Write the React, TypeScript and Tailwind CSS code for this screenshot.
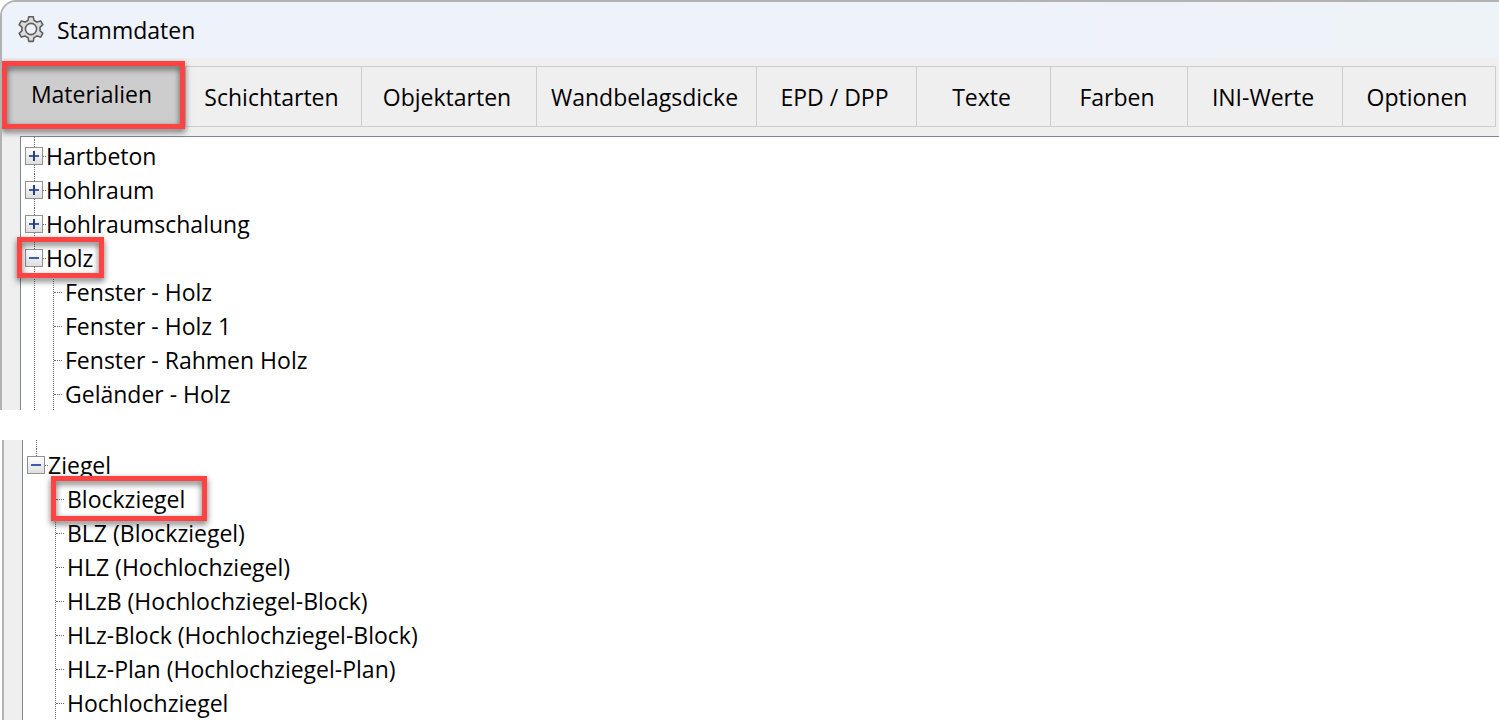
import { useState } from 'react';
import clsx from 'clsx';

type TreeNode = {
  name: string;
  marked?: boolean;
  children?: TreeNode[];
};

const tabs = [
  'Materialien',
  'Schichtarten',
  'Objektarten',
  'Wandbelagsdicke',
  'EPD / DPP',
  'Texte',
  'Farben',
  'INI-Werte',
  'Optionen',
];

const upperNodes: TreeNode[] = [
  { name: 'Hartbeton', children: [] },
  { name: 'Hohlraum', children: [] },
  { name: 'Hohlraumschalung', children: [] },
  {
    name: 'Holz',
    marked: true,
    children: [
      { name: 'Fenster - Holz' },
      { name: 'Fenster - Holz 1' },
      { name: 'Fenster - Rahmen Holz' },
      { name: 'Geländer - Holz' },
    ],
  },
];

const lowerNodes: TreeNode[] = [
  {
    name: 'Ziegel',
    children: [
      { name: 'Blockziegel', marked: true },
      { name: 'BLZ (Blockziegel)' },
      { name: 'HLZ (Hochlochziegel)' },
      { name: 'HLzB (Hochlochziegel-Block)' },
      { name: 'HLz-Block (Hochlochziegel-Block)' },
      { name: 'HLz-Plan (Hochlochziegel-Plan)' },
      { name: 'Hochlochziegel' },
    ],
  },
];

function GearIcon() {
  return (
    <svg viewBox="-14 -13 28 28" className="size-7 shrink-0" aria-hidden="true">
      <path
        d="M-3-8.6-2.2-12.4H2.2L3-8.6Q4.6-8 5.95-6.9L9.64-8.1 11.84-4.3 8.95-1.7Q9.3 0 8.95 1.7L11.84 4.3 9.64 8.1 5.95 6.9Q4.6 8 3 8.6L2.2 12.4H-2.2L-3 8.6Q-4.6 8-5.95 6.9L-9.64 8.1-11.84 4.3-8.95 1.7Q-9.3 0-8.95-1.7L-11.84-4.3-9.64-8.1-5.95-6.9Q-4.6-8-3-8.6Z"
        fill="#dcdcdc"
        stroke="#606060"
        strokeWidth="1.6"
        strokeLinejoin="round"
      />
      <circle r="5.6" fill="#eef3fa" stroke="#606060" strokeWidth="1.6" />
    </svg>
  );
}

// red frame laid over the element it marks
function Marker({ className }: { className: string }) {
  return (
    <span
      aria-hidden="true"
      className={clsx(
        'pointer-events-none absolute z-10 border-5 border-[#ff4343] drop-shadow-[0_3px_3px_rgba(0,0,0,0.6)]',
        className
      )}
    />
  );
}

function Toggle({ open, label, onClick }: { open: boolean; label: string; onClick: () => void }) {
  return (
    <button
      type="button"
      aria-expanded={open}
      aria-label={label}
      onClick={onClick}
      className="flex size-[18px] shrink-0 items-center justify-center border border-[#919191] bg-linear-to-b from-white to-[#dedede]"
    >
      <svg viewBox="0 0 16 16" className="size-4" stroke="#3f5ba9" strokeWidth="2">
        <path d="M3 8H13" />
        {!open && <path d="M8 3V13" stroke="#26407f" />}
      </svg>
    </button>
  );
}

function Tree({ nodes, continues }: { nodes: TreeNode[]; continues: boolean }) {
  const [closed, setClosed] = useState<string[]>([]);

  const toggle = (name: string) => {
    setClosed((prev) => (prev.includes(name) ? prev.filter((n) => n !== name) : [...prev, name]));
  };

  return (
    <ul>
      {nodes.map((node) => {
        const children = node.children ?? [];
        const open = children.length > 0 && !closed.includes(node.name);
        return (
          <li key={node.name}>
            <div className="flex h-[34px]">
              <div className="flex w-[18px] flex-col">
                <span className="ml-[9px] h-[7px] border-l border-dotted border-[#6b6b6b]" />
                <Toggle open={open} label={node.name} onClick={() => toggle(node.name)} />
                {continues && <span className="ml-[9px] flex-1 border-l border-dotted border-[#6b6b6b]" />}
              </div>
              <span className="mt-4 w-[3px] border-t border-dotted border-[#6b6b6b]" />
              <span className="relative leading-8">
                {node.name}
                {node.marked && <Marker className="-top-[5px] -right-[11px] -left-[29px] h-[41px]" />}
              </span>
            </div>
            {open && (
              <div className="flex">
                <div className="w-7 pl-[9px]">
                  {continues && <div className="h-full border-l border-dotted border-[#6b6b6b]" />}
                </div>
                <ul className="border-l border-dotted border-[#6b6b6b]">
                  {children.map((child) => (
                    <li key={child.name} className="flex h-[34px]">
                      <span className="mt-4 mr-[3px] w-2 border-t border-dotted border-[#6b6b6b]" />
                      <span className="relative leading-8">
                        {child.name}
                        {child.marked && <Marker className="-top-[7px] -right-[22px] -left-4 h-[45px]" />}
                      </span>
                    </li>
                  ))}
                </ul>
              </div>
            )}
          </li>
        );
      })}
    </ul>
  );
}

export default function App() {
  const [active, setActive] = useState('Materialien');

  return (
    <div className="flex h-screen flex-col gap-[30px] overflow-hidden bg-white font-['Open_Sans','Noto_Sans',sans-serif] text-[23px] whitespace-nowrap text-black">
      <section className="shrink-0 overflow-hidden rounded-tl-2xl border-t-2 border-l-2 border-[#b2b2b2] bg-[#efefef]">
        <header className="flex h-14 items-center gap-3 bg-linear-to-r from-[#eef2fb] to-[#eef3f8] pl-[15px]">
          <GearIcon />
          <h1>Stammdaten</h1>
        </header>

        <div
          role="tablist"
          className="mt-2 mr-[3px] grid h-[61px] grid-cols-[184fr_176fr_175fr_220fr_160fr_134fr_137fr_155fr_153fr] border-y border-[#cdcdcd]"
        >
          {tabs.map((tab) => (
            <button
              key={tab}
              type="button"
              role="tab"
              aria-selected={active === tab}
              onClick={() => setActive(tab)}
              className={clsx(
                'relative border-r border-[#cdcdcd] pr-1',
                active === tab ? 'bg-[#cdcdcd] pb-1' : 'pt-0.5'
              )}
            >
              {tab}
              {tab === 'Materialien' && <Marker className="-top-[6px] right-0 -bottom-[3px] left-0" />}
            </button>
          ))}
        </div>

        <div className="mt-[9px] ml-[18px] h-[274px] border-t border-l border-[#7f8791] bg-white pl-1">
          <div className="ml-[9px] h-[3px] border-l border-dotted border-[#6b6b6b]" />
          <Tree nodes={upperNodes} continues />
        </div>
      </section>

      <section className="ml-[2px] min-h-0 flex-1 border-l-2 border-[#b2b2b2] bg-[#efefef]">
        <div className="ml-[18px] h-full border-l border-[#7f8791] bg-white pl-1">
          <div className="ml-[9px] h-[9px] border-l border-dotted border-[#6b6b6b]" />
          <Tree nodes={lowerNodes} continues={false} />
        </div>
      </section>
    </div>
  );
}
